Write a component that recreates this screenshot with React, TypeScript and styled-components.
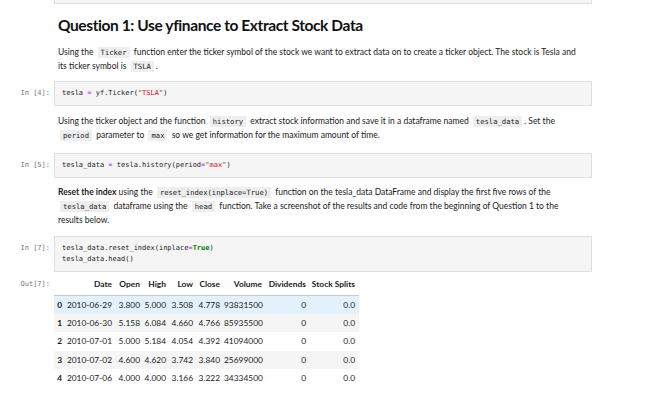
import React from "react";
import styled, { createGlobalStyle } from "styled-components";

const GlobalStyle = createGlobalStyle`
  html, body {
    margin: 0;
    padding: 0;
    background: #fff;
  }
  body {
    width: 650px;
    height: 395px;
    overflow: hidden;
    font-family: "Lato", "Open Sans", sans-serif;
    color: #222;
  }
`;

const mono = `"DejaVu Sans Mono", "Liberation Mono", monospace`;

const rows = [
  ["0", "2010-06-29", "3.800", "5.000", "3.508", "4.778", "93831500", "0", "0.0"],
  ["1", "2010-06-30", "5.158", "6.084", "4.660", "4.766", "85935500", "0", "0.0"],
  ["2", "2010-07-01", "5.000", "5.184", "4.054", "4.392", "41094000", "0", "0.0"],
  ["3", "2010-07-02", "4.600", "4.620", "3.742", "3.840", "25699000", "0", "0.0"],
  ["4", "2010-07-06", "4.000", "4.000", "3.166", "3.222", "34334500", "0", "0.0"],
];

const columns = [
  { name: "", width: 12 },
  { name: "Date", width: 50 },
  { name: "Open", width: 28 },
  { name: "High", width: 26 },
  { name: "Low", width: 27 },
  { name: "Close", width: 27 },
  { name: "Volume", width: 42 },
  { name: "Dividends", width: 44 },
  { name: "Stock Splits", width: 49 },
];

const App = () => {
  return (
    <>
      <GlobalStyle />
      <Notebook>
        <Cell>
          <Prompt />
          <PrevBox />
        </Cell>

        <Markdown $top={6}>
          <Heading>Question 1: Use yfinance to Extract Stock Data</Heading>
        </Markdown>

        <Markdown $top={8}>
          <Para>
            Using the <Code>Ticker</Code> function enter the ticker symbol of the stock we want to
            extract data on to create a ticker object. The stock is Tesla and its ticker symbol is{" "}
            <Code>TSLA</Code>.
          </Para>
        </Markdown>

        <Cell $top={8}>
          <Prompt>In [4]:</Prompt>
          <CodeBox>
            tesla <Op>=</Op> yf.Ticker(<Str>"TSLA"</Str>)
          </CodeBox>
        </Cell>

        <Markdown $top={8}>
          <Para>
            Using the ticker object and the function <Code>history</Code> extract stock information
            and save it in a dataframe named <Code>tesla_data</Code>. Set the <Code>period</Code>{" "}
            parameter to <Code>max</Code> so we get information for the maximum amount of time.
          </Para>
        </Markdown>

        <Cell $top={11}>
          <Prompt>In [5]:</Prompt>
          <CodeBox>
            tesla_data <Op>=</Op> tesla.history(period<Op>=</Op>
            <Str>"max"</Str>)
          </CodeBox>
        </Cell>

        <Markdown $top={7}>
          <Para>
            <b>Reset the index</b> using the <Code>reset_index(inplace=True)</Code> function on the
            tesla_data DataFrame and display the first five rows of the <Code>tesla_data</Code>{" "}
            dataframe using the <Code>head</Code> function. Take a screenshot of the results and
            code from the beginning of Question 1 to the results below.
          </Para>
        </Markdown>

        <Cell $top={9}>
          <Prompt>In [7]:</Prompt>
          <CodeBox>
            tesla_data.reset_index(inplace<Op>=</Op>
            <Kw>True</Kw>)
            <br />
            tesla_data.head()
          </CodeBox>
        </Cell>

        <Cell $top={7}>
          <Prompt $out>Out[7]:</Prompt>
          <div>
            <Table>
              <thead>
                <tr>
                  {columns.map((c) => (
                    <Th key={c.name} style={{ width: c.width }}>
                      {c.name}
                    </Th>
                  ))}
                </tr>
              </thead>
              <tbody>
                {rows.map((r, i) => (
                  <Row key={r[0]} $variant={i === 0 ? "hover" : i % 2 === 1 ? "odd" : "even"}>
                    {r.map((v, j) =>
                      j === 0 ? <IndexCell key={j}>{v}</IndexCell> : <Td key={j}>{v}</Td>
                    )}
                  </Row>
                ))}
              </tbody>
            </Table>
          </div>
        </Cell>
      </Notebook>
    </>
  );
};

export default App;

const Notebook = styled.div`
  display: flex;
  flex-direction: column;
  width: 650px;
`;

const Cell = styled.div<{ $top?: number }>`
  display: grid;
  grid-template-columns: 54px 538px;
  margin-top: ${(p) => p.$top ?? 0}px;
`;

const Markdown = styled.div<{ $top?: number }>`
  margin-top: ${(p) => p.$top ?? 0}px;
  padding-left: 58px;
  width: 520px;
`;

const Prompt = styled.div<{ $out?: boolean }>`
  font-family: ${mono};
  font-size: 7px;
  line-height: 11px;
  color: #757575;
  text-align: right;
  padding: ${(p) => (p.$out ? "0" : "7px")} 4px 0 0;
`;

const PrevBox = styled.div`
  height: 3px;
  background: #f5f5f5;
  border: 1px solid #e0e0e0;
  border-top: none;
`;

const Heading = styled.h2`
  margin: 0;
  font-size: 15.5px;
  letter-spacing: -0.4px;
  line-height: 24px;
  font-weight: 700;
  color: #111;
`;

const Para = styled.p`
  margin: 0;
  font-size: 8.5px;
  line-height: 14px;
  color: #1a1a1a;
`;

const Code = styled.code`
  font-family: ${mono};
  font-size: 7.2px;
  line-height: 1;
  background: #eee;
  padding: 1px 3px;
  margin: 0 2px;
  color: #222;
`;

const CodeBox = styled.div`
  background: #f5f5f5;
  border: 1px solid #e0e0e0;
  padding: 6px 7px;
  font-family: ${mono};
  font-size: 7px;
  line-height: 11px;
  color: #222;
  white-space: pre;
`;

const Op = styled.span`
  color: #aa22ff;
`;

const Str = styled.span`
  color: #ba2121;
`;

const Kw = styled.span`
  color: #008000;
  font-weight: bold;
`;

const Table = styled.table`
  border-collapse: collapse;
  table-layout: fixed;
  width: 305px;
  font-size: 8.4px;
  color: #1a1a1a;

  th,
  td {
    box-sizing: border-box;
  }
`;

const Th = styled.th`
  text-align: right;
  vertical-align: top;
  font-weight: 700;
  padding: 0 4px 0 0;
  height: 16px;
  line-height: 10px;
  border-bottom: 1px solid #c8c8c8;
  white-space: nowrap;
`;

const Row = styled.tr<{ $variant: "hover" | "odd" | "even" }>`
  height: 18.5px;
  background: ${(p) =>
    p.$variant === "hover" ? "#e3f1fc" : p.$variant === "odd" ? "#f5f5f5" : "#fff"};
`;

const Td = styled.td`
  text-align: right;
  padding: 0 4px 0 0;
  white-space: nowrap;
`;

const IndexCell = styled.th`
  text-align: right;
  font-weight: 700;
  padding: 0 4px 0 0;
`;
